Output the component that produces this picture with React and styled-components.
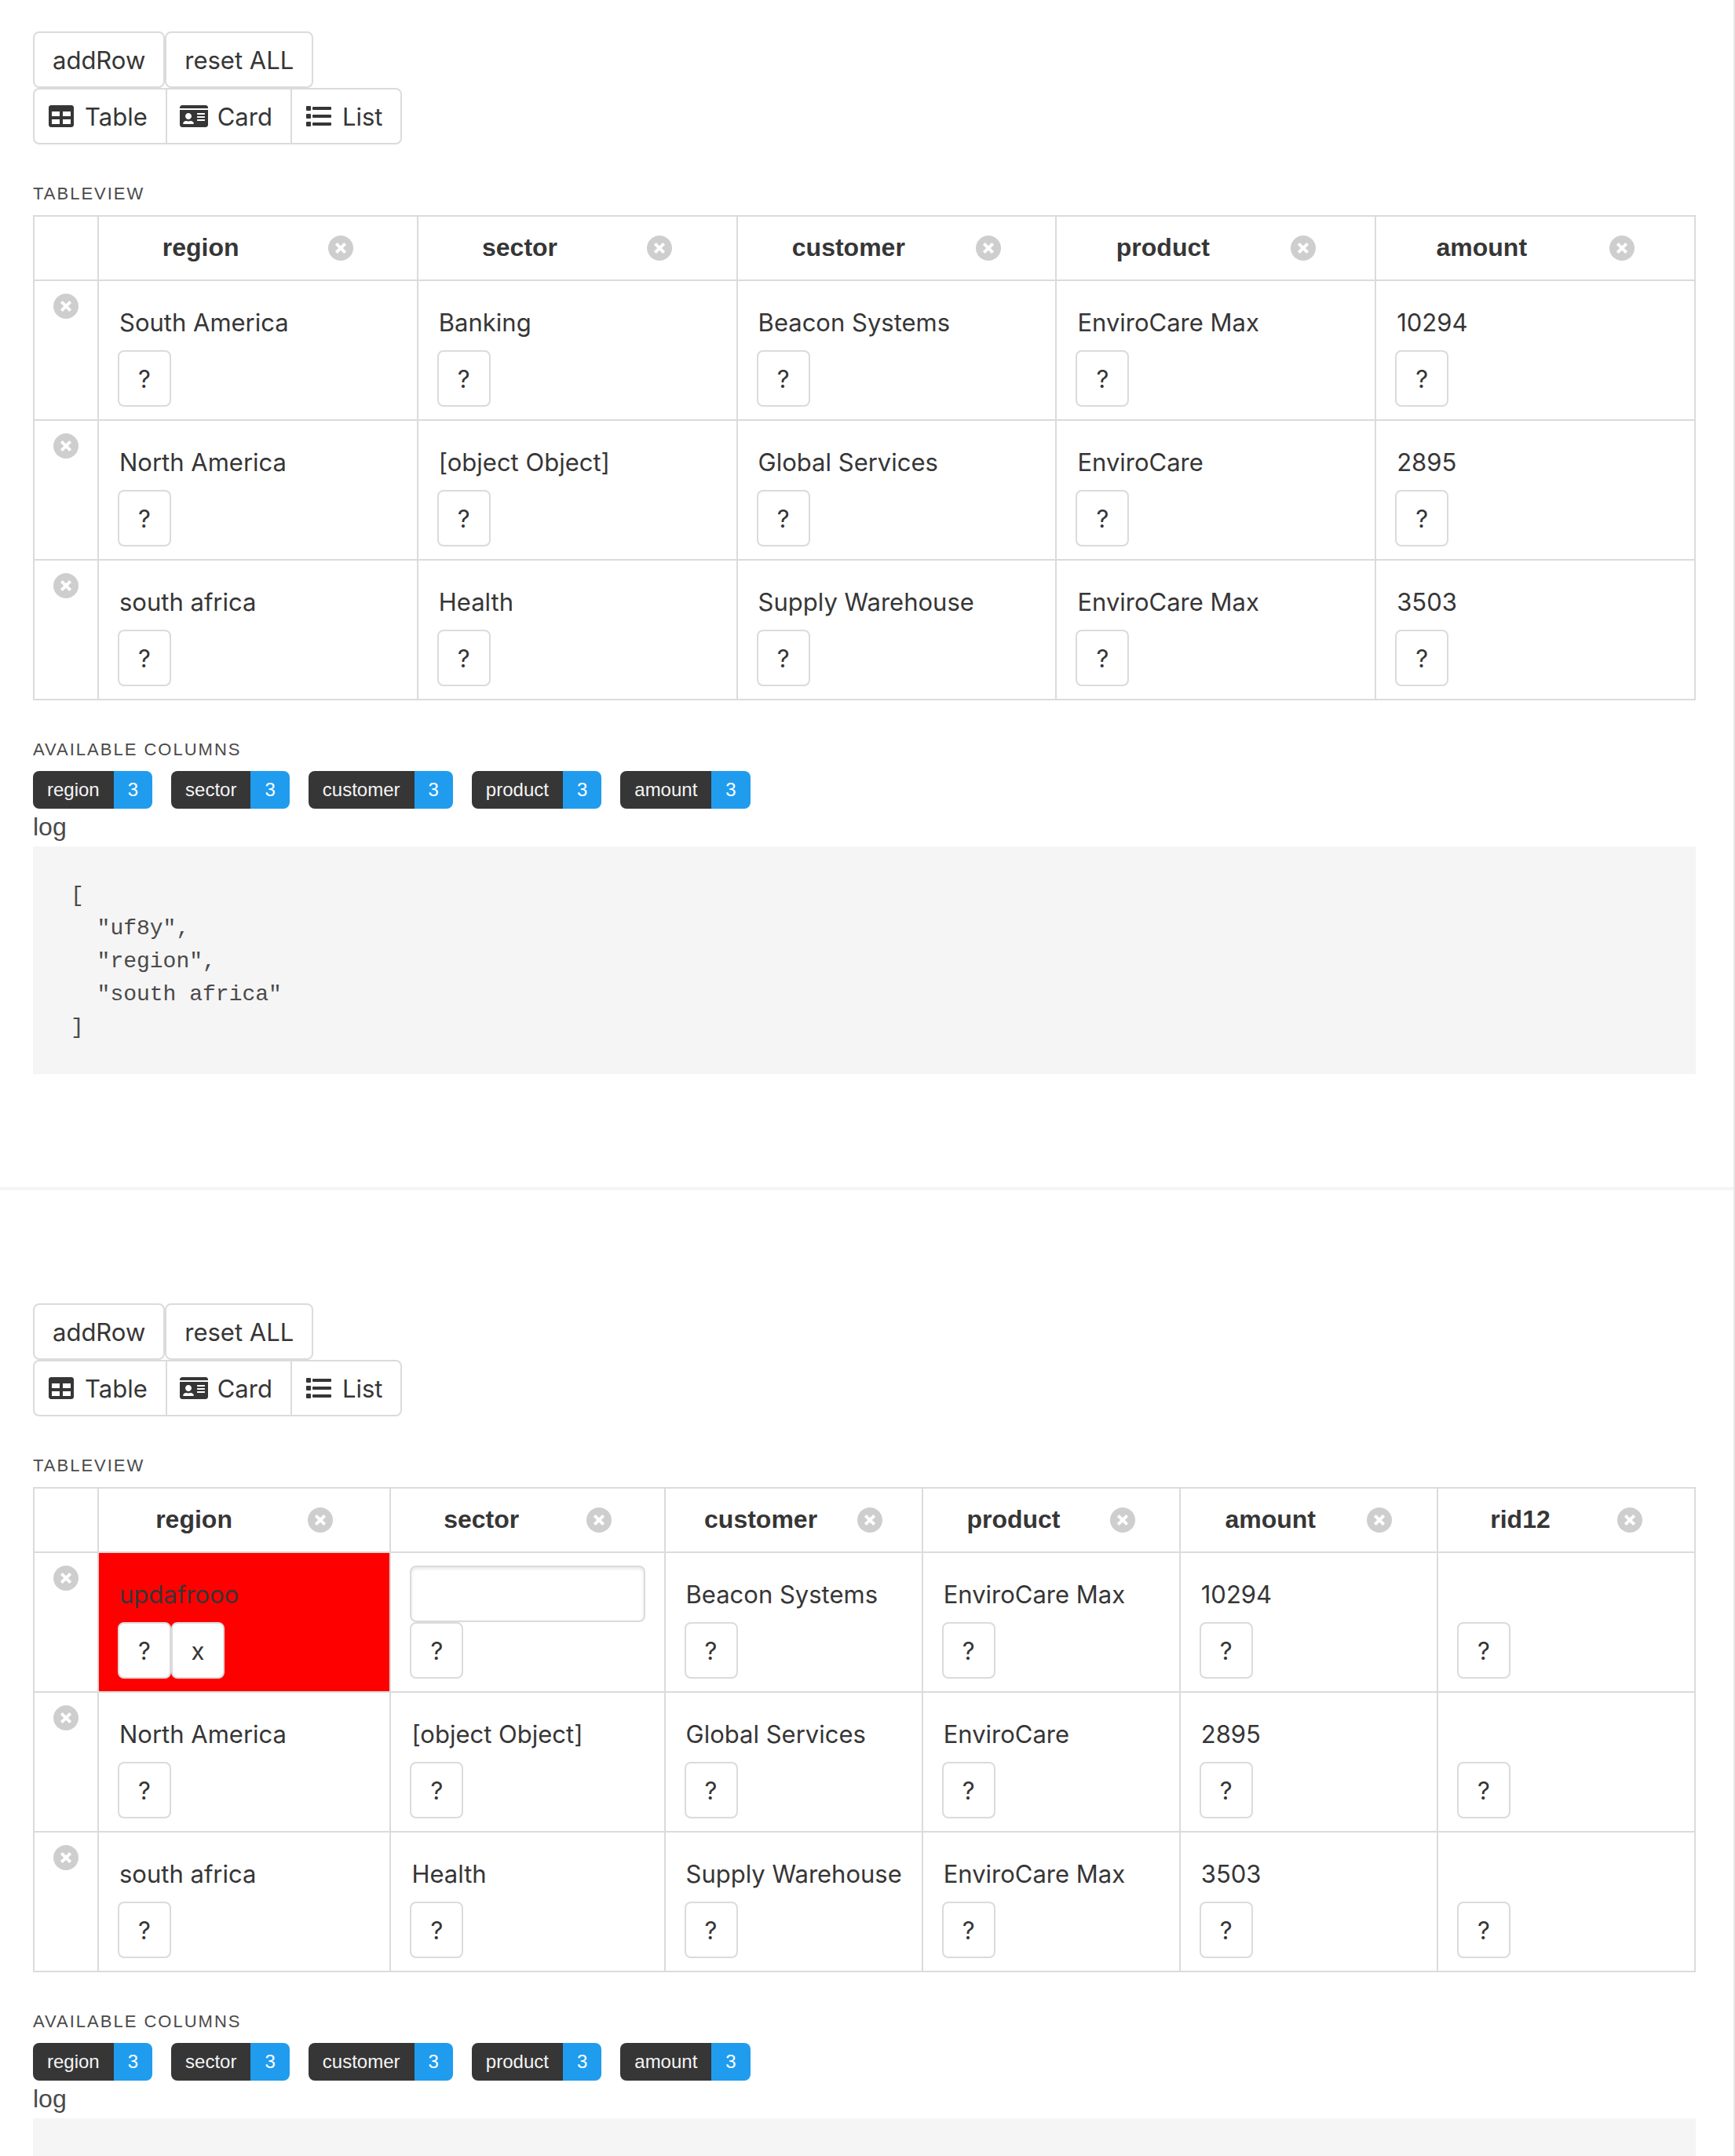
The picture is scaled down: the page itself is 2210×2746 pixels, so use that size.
import React from "react";
import styled, { createGlobalStyle } from "styled-components";
import { FaTable, FaIdCard } from "react-icons/fa";

const ink = "#363636";
const line = "#dbdbdb";
const helvetica = `"Liberation Sans", Arial, sans-serif`;
const system = `Inter, "Liberation Sans", sans-serif`;

const GlobalStyle = createGlobalStyle`
  *, *::before, *::after { box-sizing: border-box; }
  body {
    margin: 0;
    background: #fff;
    color: #4a4a4a;
    font: 400 32px/48px ${helvetica};
  }
`;

const Page = styled.main`
  height: 100vh;
  overflow: hidden auto;
  scrollbar-width: none;
  border-right: 2px solid #e7e7e7;
`;

const Panel = styled.section`
  padding: 40px 48px 0 42px;
`;

const Divider = styled.hr`
  height: 4px;
  margin: 144px 0 104px;
  border: 0;
  background: #f5f5f5;
`;

const Toolbar = styled.div`
  display: flex;
`;

const Button = styled.button`
  display: inline-flex;
  align-items: center;
  justify-content: center;
  height: 72px;
  min-width: 68px;
  padding: 2px 23px 0;
  border: 2px solid ${line};
  border-radius: 8px;
  background: #fff;
  color: ${ink};
  font: 400 31px/48px ${system};
  white-space: nowrap;
  cursor: pointer;
`;

const ViewButton = styled(Button)`
  padding-left: 10px;
  border-radius: 0;
  & + & { margin-left: -2px; }
  &:first-child { border-radius: 8px 0 0 8px; }
  &:last-child { border-radius: 0 8px 8px 0; }
`;

const IconBox = styled.span`
  display: inline-flex;
  align-items: center;
  justify-content: center;
  width: 48px;
  height: 48px;
  margin-right: 6px;
  padding-bottom: 2px;

  svg {
    flex: none;
    width: ${(p) => (p.$wide ? "36px" : "32px")};
    height: 32px;
  }
`;

const Heading = styled.h2`
  margin: 48px 0 12px;
  font: 400 22px/30px ${helvetica};
  letter-spacing: 2px;
  text-transform: uppercase;
`;

const Grid = styled.table`
  width: 100%;
  table-layout: fixed;
  border-collapse: collapse;
  color: ${ink};
`;

const Col = styled.col`
  width: ${(p) => p.$width || "auto"};
`;

const cellBox = `
  padding: 16px 24px;
  border: 2px solid ${line};
  vertical-align: top;
  text-align: left;
`;

const HeadCell = styled.th`
  ${cellBox}
  font-weight: 700;
`;

const Cell = styled.td`
  ${cellBox}
  background: ${(p) => (p.$changed ? "#f00" : "transparent")};
  background-clip: padding-box;
`;

const HeadContent = styled.div`
  display: flex;
  align-items: center;
  justify-content: space-around;
  height: 48px;
`;

const HeadTitle = styled.span`
  padding-bottom: 2px;
`;

const DeleteButton = styled.button`
  display: block;
  width: 32px;
  height: 32px;
  padding: 0;
  border: 0;
  border-radius: 50%;
  background: #cecece;
  cursor: pointer;

  svg { display: block; }
`;

const Value = styled.div`
  display: flex;
  align-items: center;
  height: 72px;
  padding: 2px 2px 0;
  font: 400 31px/48px ${system};
  white-space: nowrap;
`;

const Input = styled.input`
  display: block;
  width: 100%;
  height: 72px;
  padding: 0 20px;
  border: 2px solid ${line};
  border-radius: 8px;
  background: #fff;
  box-shadow: inset 0 2px 4px rgba(10, 10, 10, 0.1);
  color: ${ink};
  font: 400 31px/48px ${system};
`;

const Tags = styled.div`
  display: flex;
  flex-wrap: wrap;
  gap: 24px;
`;

const Tag = styled.span`
  display: flex;
  overflow: hidden;
  border-radius: 8px;
  font-size: 24px;
`;

const TagPart = styled.span`
  padding: 0 18px;
  background: ${(p) => (p.$count ? "#209cee" : ink)};
  color: ${(p) => (p.$count ? "#fff" : "#f5f5f5")};
`;

const LogLabel = styled.div`
  padding-bottom: 2px;
  line-height: 46px;
`;

const Log = styled.pre`
  min-height: 122px;
  margin: 0;
  padding: 42px 48px 38px;
  background: #f5f5f5;
  font: 400 28px/42px "Liberation Mono", monospace;
`;

function ListIcon() {
  return (
    <svg viewBox="0 0 32 32" fill="currentColor" aria-hidden="true">
      {[3, 13, 23].map((y) => (
        <g key={y}>
          <rect x="0" y={y} width="6" height="6" rx="1" />
          <rect x="8" y={y + 1} width="24" height="4" rx="1" />
        </g>
      ))}
    </svg>
  );
}

function Delete({ label }) {
  return (
    <DeleteButton type="button" aria-label={label}>
      <svg viewBox="0 0 32 32" width="32" height="32" stroke="#fff" strokeWidth="4" aria-hidden="true">
        <path d="M10.3 10.3 21.7 21.7M21.7 10.3 10.3 21.7" />
      </svg>
    </DeleteButton>
  );
}

const tagNames = ["region", "sector", "customer", "product", "amount"];

const first = {
  columns: tagNames.map((name) => ({ name })),
  rows: [
    ["South America", "Banking", "Beacon Systems", "EnviroCare Max", "10294"],
    ["North America", "[object Object]", "Global Services", "EnviroCare", "2895"],
    ["south africa", "Health", "Supply Warehouse", "EnviroCare Max", "3503"],
  ],
  log: ["uf8y", "region", "south africa"],
};

const second = {
  columns: [
    { name: "region", width: "17.6%" },
    { name: "sector", width: "16.5%" },
    { name: "customer" },
    { name: "product" },
    { name: "amount" },
    { name: "rid12" },
  ],
  rows: [
    [{ text: "updafrooo", changed: true }, { editing: true }, "Beacon Systems", "EnviroCare Max", "10294", ""],
    ["North America", "[object Object]", "Global Services", "EnviroCare", "2895", ""],
    ["south africa", "Health", "Supply Warehouse", "EnviroCare Max", "3503", ""],
  ],
};

function DataCell({ value, column }) {
  const cell = typeof value === "string" ? { text: value } : value;
  return (
    <Cell $changed={cell.changed}>
      {cell.editing ? <Input type="text" aria-label={column} /> : <Value>{cell.text}</Value>}
      <Toolbar>
        <Button type="button">?</Button>
        {cell.changed && <Button type="button">x</Button>}
      </Toolbar>
    </Cell>
  );
}

function TablePanel({ columns, rows, log }) {
  return (
    <Panel>
      <Toolbar>
        <Button type="button">addRow</Button>
        <Button type="button">reset ALL</Button>
      </Toolbar>
      <Toolbar>
        <ViewButton type="button"><IconBox><FaTable /></IconBox>Table</ViewButton>
        <ViewButton type="button"><IconBox $wide><FaIdCard /></IconBox>Card</ViewButton>
        <ViewButton type="button"><IconBox><ListIcon /></IconBox>List</ViewButton>
      </Toolbar>

      <Heading>TableView</Heading>
      <Grid>
        <colgroup>
          <Col $width="82px" />
          {columns.map((c) => <Col key={c.name} $width={c.width} />)}
        </colgroup>
        <thead>
          <tr>
            <HeadCell />
            {columns.map((c) => (
              <HeadCell key={c.name} scope="col">
                <HeadContent>
                  <HeadTitle>{c.name}</HeadTitle>
                  <Delete label={`Delete column ${c.name}`} />
                </HeadContent>
              </HeadCell>
            ))}
          </tr>
        </thead>
        <tbody>
          {rows.map((row, r) => (
            <tr key={r}>
              <Cell><Delete label={`Delete row ${r + 1}`} /></Cell>
              {row.map((value, c) => <DataCell key={c} value={value} column={columns[c].name} />)}
            </tr>
          ))}
        </tbody>
      </Grid>

      <Heading>Available columns</Heading>
      <Tags>
        {tagNames.map((name) => (
          <Tag key={name}>
            <TagPart>{name}</TagPart>
            <TagPart $count>3</TagPart>
          </Tag>
        ))}
      </Tags>
      <LogLabel>log</LogLabel>
      <Log>{log && JSON.stringify(log, null, 2)}</Log>
    </Panel>
  );
}

export default function App() {
  return (
    <>
      <GlobalStyle />
      <Page>
        <TablePanel {...first} />
        <Divider />
        <TablePanel {...second} />
      </Page>
    </>
  );
}
